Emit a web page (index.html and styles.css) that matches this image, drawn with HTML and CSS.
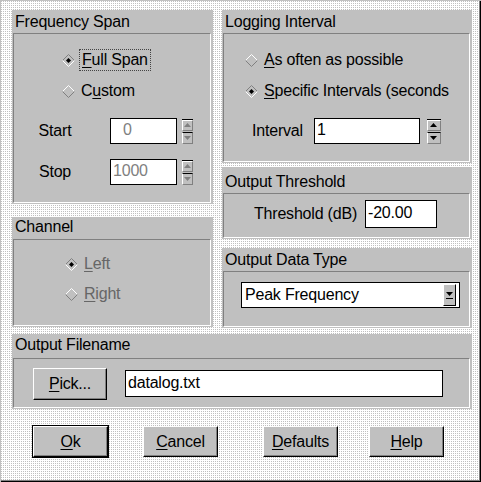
FILE: index.html
```html
<!DOCTYPE html>
<html lang="en">
<head>
  <meta charset="UTF-8" />
  <title>Logging Options</title>
  <link rel="stylesheet" href="styles.css">
</head>
<body>
  <div class="dialog">
    <div class="columns">
      <div class="col col-left">
        <section class="panel freq">
          <div class="panel-title">Frequency Span</div>
          <div class="frame">
            <div class="radios">
              <div class="radio on">
                <svg class="diamond" viewBox="0 0 13 13" width="13" height="13"><path d="M0.5 6.5 L6.5 0.5 L12.5 6.5" stroke="#808080" fill="none"/><path d="M0.5 6.5 L6.5 12.5 L12.5 6.5" stroke="#fff" fill="none"/><path d="M6.5 4 L9 6.5 L6.5 9 L4 6.5Z" fill="#000"/></svg>
                <span class="focus"><u>F</u>ull Span</span>
              </div>
              <div class="radio">
                <svg class="diamond" viewBox="0 0 13 13" width="13" height="13"><path d="M0.5 6.5 L6.5 0.5 L12.5 6.5" stroke="#fff" fill="none"/><path d="M0.5 6.5 L6.5 12.5 L12.5 6.5" stroke="#808080" fill="none"/></svg>
                <span>C<u>u</u>stom</span>
              </div>
            </div>
            <div class="field">
              <span class="field-label">Start</span>
              <div class="entry entry-num disabled start">0</div>
              <div class="spin disabled">
                <span class="spin-btn"><svg viewBox="0 0 7 4" width="7" height="4"><path d="M3.5 0 L7 4 L0 4Z"/></svg></span>
                <span class="spin-btn"><svg viewBox="0 0 7 4" width="7" height="4"><path d="M0 0 L7 0 L3.5 4Z"/></svg></span>
              </div>
            </div>
            <div class="field stop">
              <span class="field-label">Stop</span>
              <div class="entry entry-num disabled">1000</div>
              <div class="spin disabled">
                <span class="spin-btn"><svg viewBox="0 0 7 4" width="7" height="4"><path d="M3.5 0 L7 4 L0 4Z"/></svg></span>
                <span class="spin-btn"><svg viewBox="0 0 7 4" width="7" height="4"><path d="M0 0 L7 0 L3.5 4Z"/></svg></span>
              </div>
            </div>
          </div>
        </section>

        <section class="panel channel">
          <div class="panel-title">Channel</div>
          <div class="frame">
            <div class="radios">
              <div class="radio on disabled">
                <svg class="diamond" viewBox="0 0 13 13" width="13" height="13"><path d="M0.5 6.5 L6.5 0.5 L12.5 6.5" stroke="#808080" fill="none"/><path d="M0.5 6.5 L6.5 12.5 L12.5 6.5" stroke="#fff" fill="none"/><path d="M6.5 4 L9 6.5 L6.5 9 L4 6.5Z" fill="#000"/></svg>
                <span><u>L</u>eft</span>
              </div>
              <div class="radio disabled">
                <svg class="diamond" viewBox="0 0 13 13" width="13" height="13"><path d="M0.5 6.5 L6.5 0.5 L12.5 6.5" stroke="#fff" fill="none"/><path d="M0.5 6.5 L6.5 12.5 L12.5 6.5" stroke="#808080" fill="none"/></svg>
                <span><u>R</u>ight</span>
              </div>
            </div>
          </div>
        </section>
      </div>

      <div class="col col-right">
        <section class="panel logging">
          <div class="panel-title">Logging Interval</div>
          <div class="frame">
            <div class="radios">
              <div class="radio">
                <svg class="diamond" viewBox="0 0 13 13" width="13" height="13"><path d="M0.5 6.5 L6.5 0.5 L12.5 6.5" stroke="#fff" fill="none"/><path d="M0.5 6.5 L6.5 12.5 L12.5 6.5" stroke="#808080" fill="none"/></svg>
                <span><u>A</u>s often as possible</span>
              </div>
              <div class="radio on">
                <svg class="diamond" viewBox="0 0 13 13" width="13" height="13"><path d="M0.5 6.5 L6.5 0.5 L12.5 6.5" stroke="#808080" fill="none"/><path d="M0.5 6.5 L6.5 12.5 L12.5 6.5" stroke="#fff" fill="none"/><path d="M6.5 4 L9 6.5 L6.5 9 L4 6.5Z" fill="#000"/></svg>
                <span><u>S</u>pecific Intervals (seconds</span>
              </div>
            </div>
            <div class="field interval">
              <span class="field-label">Interval</span>
              <div class="entry">1</div>
              <div class="spin wide">
                <span class="spin-btn"><svg viewBox="0 0 7 4" width="7" height="4"><path d="M3.5 0 L7 4 L0 4Z"/></svg></span>
                <span class="spin-btn"><svg viewBox="0 0 7 4" width="7" height="4"><path d="M0 0 L7 0 L3.5 4Z"/></svg></span>
              </div>
            </div>
          </div>
        </section>

        <section class="panel threshold">
          <div class="panel-title">Output Threshold</div>
          <div class="frame">
            <div class="field threshold-row">
              <span class="field-label">Threshold (dB)</span>
              <div class="entry">-20.00</div>
            </div>
          </div>
        </section>

        <section class="panel datatype">
          <div class="panel-title">Output Data Type</div>
          <div class="frame">
            <div class="combo">
              <span class="combo-text">Peak Frequency</span>
              <span class="combo-btn"><svg viewBox="0 0 7 7" width="7" height="7"><path d="M0 0 L7 0 L3.5 4Z"/><rect x="0" y="6" width="7" height="1"/></svg></span>
            </div>
          </div>
        </section>
      </div>
    </div>

    <section class="panel filename">
      <div class="panel-title">Output Filename</div>
      <div class="frame file-row">
        <button class="btn pick"><u>P</u>ick...</button>
        <div class="entry file-entry">datalog.txt</div>
      </div>
    </section>

    <div class="buttons">
      <button class="btn default"><u>O</u>k</button>
      <button class="btn cancel"><u>C</u>ancel</button>
      <button class="btn defaults"><u>D</u>efaults</button>
      <button class="btn help"><u>H</u>elp</button>
    </div>
  </div>
</body>
</html>
```

FILE: styles.css
```css
body {
  margin: 0;
  font-family: "Liberation Sans", Arial, sans-serif;
  font-size: 16px;
  letter-spacing: -0.2px;
  color: #000;
}

/* stippled dialog background */
.dialog {
  width: 481px;
  height: 482px;
  box-sizing: border-box;
  background: conic-gradient(from 90deg at 1px 1px, #c0c0c0 90deg, #fff 0) 0 0 / 2px 2px;
  box-shadow: inset 1px 1px 0 #c0c0c0, inset -1px -1px 0 #000, inset -2px -2px 0 #808080;
  overflow: hidden;
}

.columns {
  display: flex;
  gap: 9px;
  padding: 10px 0 0 12px;
}
.col {
  display: flex;
  flex-direction: column;
}
.col-left { width: 201px; }
.col-right { width: 250px; }

/* group box: gray title strip + sunken frame */
.panel {
  background: #c0c0c0;
  padding: 0 2px 1px 1px;
  display: flex;
  flex-direction: column;
  box-sizing: border-box;
}
.panel-title {
  height: 23px;
  line-height: 23px;
  padding-left: 2px;
  white-space: nowrap;
}
.frame {
  flex: 1;
  border-top: 1px solid #808080;
  border-left: 1px solid #808080;
  border-bottom: 1px solid #fff;
  border-right: 1px solid #fff;
}

.freq { height: 194px; }
.channel { height: 110px; margin-top: 13px; }
.logging { height: 153px; }
.threshold { height: 72px; margin-top: 4px; }
.threshold .panel-title { height: 26px; line-height: 29px; }
.datatype { height: 80px; margin-top: 9px; }
.filename { height: 75px; margin: 6px 0 0 12px; width: 460px; }
.filename .panel-title { height: 24px; line-height: 21px; }
.channel .panel-title { height: 22px; line-height: 20px; }

/* radio buttons */
.radios {
  display: flex;
  flex-direction: column;
  gap: 11px;
  padding: 16px 0 0 48px;
}
.logging .radios { padding-left: 21px; }
.channel .radios { padding: 14px 0 0 51px; gap: 10px; }
.radio {
  display: flex;
  align-items: center;
  height: 20px;
  gap: 6px;
  white-space: nowrap;
}
.diamond { flex: none; }
.focus {
  outline: 1px dotted #444;
  outline-offset: 1px;
  padding: 0 1px;
}
.radio.disabled span {
  color: #666;
}
u { text-decoration-thickness: 1px; text-underline-offset: 2px; }

/* label + entry + spinner rows */
.field {
  display: flex;
  align-items: center;
  margin-top: 17px;
}
.field.stop { margin-top: 15px; }
.field-label {
  width: 82px;
  text-align: center;
}
.entry {
  background: #fff;
  border: 1px solid #000;
  box-sizing: border-box;
  height: 26px;
  line-height: 22px;
  padding: 0 2px;
  white-space: nowrap;
}
.entry-num {
  width: 67px;
  margin-left: 14px;
}
.entry.start { padding-left: 12px; }
.entry.disabled { color: #808080; }

.spin {
  display: flex;
  flex-direction: column;
  margin-left: 5px;
  width: 11px;
  border-top: 1px solid #000;
}
.spin.wide { width: 14px; margin-left: 7px; }
.spin-btn {
  height: 11px;
  box-sizing: border-box;
  display: flex;
  align-items: center;
  justify-content: center;
  background: #c0c0c0;
  border-top: 1px solid #fff;
  border-left: 1px solid #fff;
  border-right: 1px solid #808080;
  border-bottom: 1px solid #808080;
}
.spin-btn + .spin-btn { margin-top: 1px; border-top: 1px solid #000; height: 12px; }
.spin-btn svg { fill: #000; }
.spin.disabled .spin-btn svg { fill: #808080; }

.interval { margin-top: 17px; }
.interval .field-label {
  width: auto;
  padding: 0 11px 0 28px;
}
.interval .entry { width: 106px; }

.threshold-row { margin-top: 6px; }
.threshold-row .field-label {
  width: auto;
  padding: 0 8px 0 30px;
}
.threshold-row .entry {
  width: 72px;
  height: 28px;
  line-height: 24px;
}

/* combobox */
.combo {
  margin: 10px 0 0 17px;
  width: 219px;
  height: 26px;
  box-sizing: border-box;
  background: #fff;
  border: 1px solid #000;
  display: flex;
  align-items: center;
  justify-content: space-between;
  padding: 0 3px 0 3px;
}
.combo-btn {
  width: 13px;
  height: 22px;
  box-sizing: border-box;
  background: #c0c0c0;
  border-top: 1px solid #fff;
  border-left: 1px solid #fff;
  border-right: 1px solid #000;
  border-bottom: 1px solid #000;
  display: flex;
  align-items: center;
  justify-content: center;
}

/* push buttons */
.btn {
  font: inherit;
  letter-spacing: inherit;
  color: #000;
  background: #c0c0c0;
  width: 75px;
  height: 31px;
  padding: 0;
  box-sizing: border-box;
  border: 1px solid;
  border-color: #fff #000 #000 #fff;
  box-shadow: inset -1px -1px 0 #808080;
}
.btn.default { outline: 1px solid #000; }

.file-row {
  display: flex;
  align-items: flex-start;
  padding: 9px 0 0 19px;
}
.pick { width: 74px; height: 32px; }
.file-entry {
  width: 318px;
  height: 27px;
  line-height: 23px;
  margin: 2px 0 0 18px;
}

.buttons {
  display: flex;
  padding: 17px 0 0 33px;
}
.cancel { margin-left: 35px; }
.defaults { margin-left: 45px; }
.help { margin-left: 31px; }
```
